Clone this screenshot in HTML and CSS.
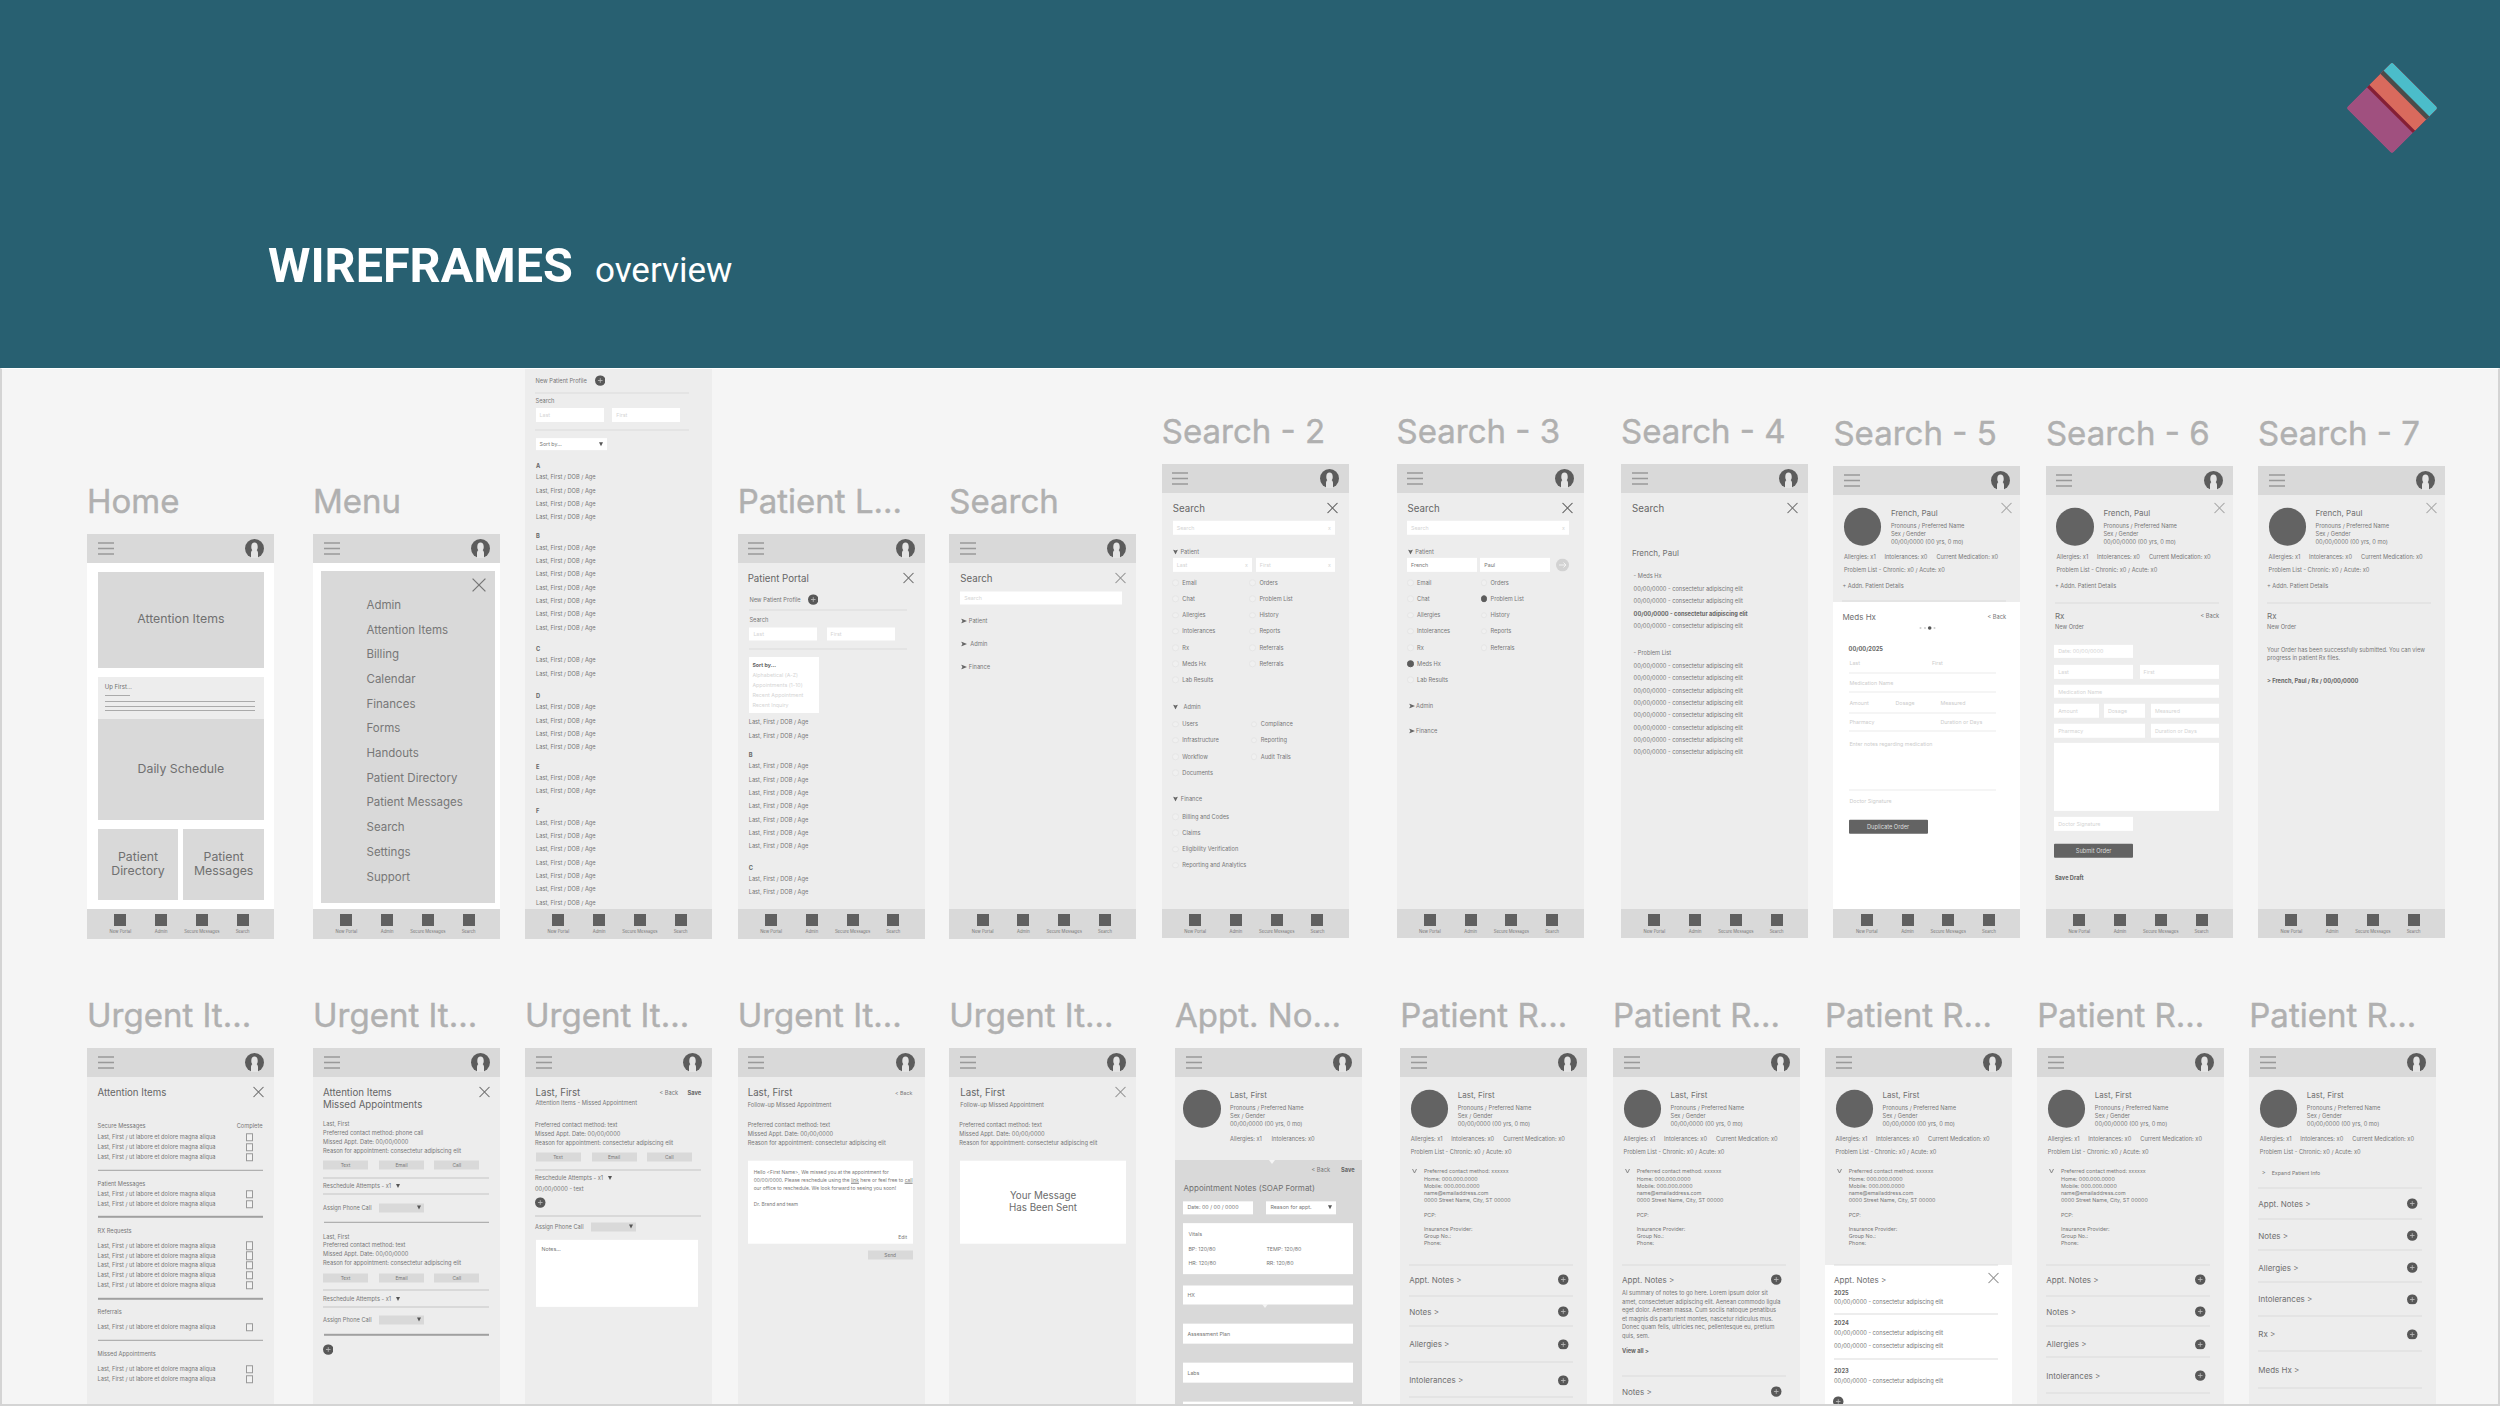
FILE: index.html
```html
<!DOCTYPE html>
<html lang="en">

<head>
    <meta charset="UTF-8">
    <meta name="viewport" content="width=device-width, initial-scale=1.0">
    <title>Wireframes - overview</title>
    <link rel="stylesheet" href="styles.css">
</head>

<body>
    <header class="banner">
        <h1>WIREFRAMES <span>overview</span></h1>
        <svg class="logo" viewBox="0 0 94 94" width="94" height="94">
            <defs>
                <clipPath id="tile">
                    <rect x="14.5" y="14.5" width="65" height="65" rx="3" />
                </clipPath>
            </defs>
            <g transform="rotate(45 47 47)" clip-path="url(#tile)">
                <rect x="14.5" y="14.5" width="65" height="65" fill="#a0507f" />
                <rect x="14.5" y="14.5" width="65" height="35.5" fill="#851f35" />
                <rect x="14.5" y="14.5" width="65" height="32.2" fill="#d96a5d" />
                <rect x="14.5" y="14.5" width="65" height="16.5" fill="#4a4c4b" />
                <rect x="14.5" y="14.5" width="65" height="12" fill="#4bbdca" />
            </g>
        </svg>
    </header>

    <main class="canvas" id="canvas"></main>

    <script src="script.js"></script>
</body>

</html>
```

FILE: styles.css
```css
body {
    margin: 0;
    width: 2500px;
    height: 1406px;
    overflow: hidden;
    font-family: Inter, "Liberation Sans", sans-serif;
    display: flex;
    flex-direction: column;
}

/* Banner */
.banner {
    height: 368px;
    flex: none;
    box-sizing: border-box;
    padding: 61px 61px 0 268px;
    background-color: #286071;
    color: white;
    font-family: Roboto, sans-serif;
    display: flex;
    justify-content: space-between;
    align-items: flex-start;
}

.banner h1 {
    margin: 176px 0 0;
    font-size: 48.5px;
    line-height: 58px;
    font-weight: 700;
    white-space: nowrap;
}

.banner h1 span {
    margin-left: 10px;
    font-size: 35px;
    font-weight: 400;
}

.logo {
    display: block;
}

/* Canvas with the artboards */
.canvas {
    position: relative;
    flex: 1;
    box-sizing: border-box;
    border: 2px solid #d4d4d4;
    border-top: 1px solid #fff;
    background-color: #f5f5f5;
    overflow: hidden;
}

.artboard {
    position: absolute;
    width: 187px;
}

.artboard h2 {
    margin: 0 0 13px;
    height: 40px;
    line-height: 40px;
    font-size: 33px;
    font-weight: 400;
    color: #b0b0b0;
    -webkit-text-stroke: 0.4px #b0b0b0;
    white-space: nowrap;
}

.phone {
    height: 405px;
    display: flex;
    flex-direction: column;
    background-color: #ededed;
    color: #777;
    font-size: 5.7px;
    line-height: 8px;
    white-space: nowrap;
}

.phone.white {
    background-color: #fff;
}

.topbar {
    flex: none;
    height: 28.5px;
    box-sizing: border-box;
    padding: 0 10px 0 10.5px;
    background-color: #d9d9d9;
    display: flex;
    align-items: center;
    justify-content: space-between;
}

.body {
    flex: 1;
    min-height: 0;
    display: flex;
    flex-direction: column;
}

.tabbar {
    flex: none;
    height: 29.5px;
    box-sizing: border-box;
    padding: 5px 11px 0 13px;
    background-color: #d9d9d9;
    display: flex;
}

.tab {
    flex: 1;
    display: flex;
    flex-direction: column;
    align-items: center;
    font-size: 4.2px;
    line-height: 12px;
}

.tab i {
    width: 12px;
    height: 12px;
    background-color: #606060;
}

/* Rows: content sits centred on the bottom edge of its row */
.row {
    flex: none;
    display: flex;
    align-items: flex-end;
}

.cell {
    flex: none;
    transform: translateY(50%);
}

.panel {
    flex: 1;
}

.panel.light {
    background-color: #fff;
}

.panel.dark {
    background-color: #d9d9d9;
}

.h {
    font-size: 9.7px;
    line-height: 12px;
    color: #666;
}

.m {
    font-size: 8px;
    line-height: 10px;
    color: #707070;
}

.xs {
    font-size: 5.3px;
}

.b {
    font-weight: 700;
    color: #666;
}

.pale {
    color: #ccc;
}

.para {
    line-height: 8.6px;
}

.contact {
    font-size: 5.3px;
    line-height: 7.2px;
}

.line {
    height: 1px;
    background-color: #dcdcdc;
}

.line.faint {
    background-color: #ececec;
}

.line.mid {
    background-color: #c6c6c6;
}

.line.bold {
    height: 1.6px;
    background-color: #a0a0a0;
}

.box {
    box-sizing: border-box;
    padding: 0 4px;
    background-color: #fff;
    display: flex;
    align-items: center;
    justify-content: space-between;
    color: #d4d4d4;
    font-size: 5.3px;
}

.box.ink {
    color: #777;
}

.box.top {
    display: block;
    padding: 5px 6px;
}

.box.sort {
    padding: 3px;
    line-height: 10.2px;
}

.box.message {
    justify-content: center;
    text-align: center;
    font-size: 9.8px;
    line-height: 12px;
    color: #6c6c6c;
}

.box.letter {
    align-items: stretch;
    flex-direction: column;
    padding: 7px 6px 3px;
    font-size: 4.9px;
    color: #777;
}

.letter .edit {
    align-self: flex-end;
}

.box.vitals {
    padding: 4px 5px;
    display: grid;
    grid-template-columns: 78px 1fr;
    align-items: center;
    color: #777;
}

.btn {
    box-sizing: border-box;
    height: 9px;
    background-color: #d9d9d9;
    text-align: center;
    line-height: 9px;
    font-size: 4.8px;
}

.select {
    height: 9px;
    background-color: #d9d9d9;
    display: flex;
    align-items: center;
    justify-content: flex-end;
    box-sizing: border-box;
    padding-right: 3px;
}

.solid {
    height: 13.7px;
    border-radius: 1px;
    background-color: #636363;
    color: #ddd;
    text-align: center;
    line-height: 13.7px;
}

.check {
    width: 6.5px;
    height: 8.5px;
    box-sizing: border-box;
    border: 1px solid #999;
    background-color: #f2f2f2;
}

.radio {
    width: 6.5px;
    height: 6.5px;
    box-sizing: border-box;
    border: 0.5px solid #e6e6e6;
    border-radius: 50%;
    background-color: #f0f0f0;
}

.radio.on {
    border-color: #5c5c5c;
    background-color: #5c5c5c;
}

.photo {
    width: 37.5px;
    height: 37.5px;
    border-radius: 50%;
    background-color: #636363;
}

svg {
    display: block;
}

.caret {
    width: 0;
    height: 0;
    border: 2px solid transparent;
    border-top: 4px solid #555;
    border-bottom: 0;
}

.notch {
    width: 0;
    height: 0;
    border: 3px solid transparent;
    border-top: 4px solid #f5f5f5;
    border-bottom: 0;
}

.with-caret {
    display: flex;
    align-items: center;
    gap: 5px;
}

/* Home */
.home {
    flex: 1;
    padding: 9.5px 10px 9.5px 10.7px;
    display: flex;
    flex-direction: column;
    gap: 9.5px;
    font-size: 12.3px;
    line-height: 14.6px;
    text-align: center;
    color: #707070;
}

.tile {
    flex: 1;
    background-color: #d9d9d9;
    display: flex;
    align-items: center;
    justify-content: center;
}

.attention {
    flex: none;
    height: 95.5px;
}

.schedule {
    flex: none;
    height: 142.5px;
    display: flex;
    flex-direction: column;
}

.first {
    height: 41.5px;
    box-sizing: border-box;
    padding: 6px 9px 0 7px;
    background-color: #ededed;
    font-size: 6px;
    line-height: 8px;
    text-align: left;
}

.first div {
    height: 1px;
    margin-top: 3.7px;
    background-color: #aaa;
}

.first .short {
    width: 25px;
    margin: 4px 0 5px;
}

.pair {
    flex: 1;
    display: flex;
    gap: 5px;
}

/* Menu */
.menu {
    flex: 1;
    margin: 8.3px 5.5px 6.5px 7.5px;
    background-color: #d9d9d9;
    display: flex;
    flex-direction: column;
}

.menu svg {
    align-self: flex-end;
    margin: 7px 9px 0 0;
}

.menu ul {
    list-style: none;
    margin: 0;
    padding: 1px 0 0 46px;
    font-size: 11.5px;
    line-height: 24.7px;
    color: #777;
}
```

FILE: script.js
```js
const CANVAS_TOP = 369;
const BAR = 28.5;

// icons
const burger = `<svg width="16" height="13" viewBox="0 0 16 13"><path d="M0 1h16M0 6.5h16M0 12h16" stroke="#999" stroke-width="1.3"/></svg>`;
const avatar = `<svg width="19" height="19" viewBox="0 0 19 19"><circle cx="9.5" cy="9.5" r="9.5" fill="#5c5c5c"/><path d="M6 19v-5c0-1.6.8-2.3 1.3-2.7-1-1.3-1-2.5-1-3.8 0-2.5 1.3-4 3.2-4s3.2 1.5 3.2 4c0 1.3 0 2.5-1 3.8.5.4 1.3 1.1 1.3 2.7v5z" fill="#e4e4e4"/></svg>`;
const plus = `<svg width="10.5" height="10.5" viewBox="0 0 10 10"><circle cx="5" cy="5" r="5" fill="#585858"/><path d="M5 2.8v4.4M2.8 5h4.4" stroke="#bbb" stroke-width=".8"/></svg>`;
const close = (size = 11, color = "#777") => `<svg width="${size}" height="${size}" viewBox="0 0 12 12"><path d="M.5.5l11 11M11.5.5l-11 11" stroke="${color}" stroke-width="1.1"/></svg>`;
const down = `<svg width="5" height="5" viewBox="0 0 5 5"><path d="M0 0l2.500 1L5 0 2.500 5z" fill="#666"/></svg>`;
const right = `<svg width="6" height="5" viewBox="0 0 6 5"><path d="M0 0l6 2.500L0 5l1.500-2.500z" fill="#666"/></svg>`;
const vee = `<svg width="5" height="5" viewBox="0 0 5 5"><path d="M.5.5l2 4 2-4" stroke="#888" fill="none"/></svg>`;
const go = `<svg width="13" height="13" viewBox="0 0 13 13"><circle cx="6.5" cy="6.5" r="6.5" fill="#d2d2d2"/><path d="M3 6.500h7M7.500 4l2.500 2.500L7.500 9" stroke="#f2f2f2" fill="none"/></svg>`;
const dots = `<svg width="18" height="4" viewBox="0 0 18 4"><g fill="#ccc"><circle cx="1.5" cy="2" r="1"/><circle cx="6" cy="2" r="1"/><circle cx="15.5" cy="2" r="1"/></g><circle cx="10.7" cy="2" r="1.8" fill="#555"/></svg>`;
const caret = `<div class="caret"></div>`;

// small pieces
const t = (text, cls = "") => `<div class="${cls}">${text}</div>`;
const box = (w, h, text = "", cls = "") => `<div class="box ${cls}" style="width:${w}px;height:${h}px">${text}</div>`;
const sized = (cls, w, text = "") => `<div class="${cls}" style="width:${w}px">${text}</div>`;
const line = (y, x = 9, w = 164, cls = "") => row(y, x, sized("line " + cls, w));

// one row: a y for its middle, then x / content pairs
function row(y, ...cells) {
    return { y, cells };
}

function rows(start, step, items, make) {
    return items.map((item, i) => make(start + i * step, item));
}

function panel(y, cls, content) {
    return { y, cls, content };
}

function stack(items, start) {
    let at = start;
    return items.flat(Infinity).map(item => {
        const height = item.y - at;
        at = item.y;
        if (item.content) {
            return `<div style="height:${height}px"></div><div class="panel ${item.cls}">${stack(item.content, item.y)}</div>`;
        }
        let cells = "";
        for (let i = 0; i < item.cells.length; i += 2) {
            const next = item.cells[i + 2];
            const width = next === undefined ? "auto" : (next - item.cells[i]) + "px";
            cells += `<div class="cell" style="width:${width}">${item.cells[i + 1]}</div>`;
        }
        return `<div class="row" style="height:${height}px;padding-left:${item.cells[0]}px">${cells}</div>`;
    }).join("");
}

function artboard(title, x, y, content, opts = {}) {
    const el = document.createElement("section");
    el.className = "artboard";
    el.style.left = (x - 2) + "px";
    el.style.top = (y - CANVAS_TOP - (title ? 53 : 0)) + "px";
    const inner = typeof content === "string" ? content : stack(content, title ? BAR : 0);
    const height = opts.open ? 405 : 938.5 - y;
    const tabs = ["New Portal", "Admin", "Secure Messages", "Search"];
    el.innerHTML = `
        ${title ? `<h2>${title}</h2>` : ""}
        <div class="phone ${opts.white ? "white" : ""}" style="height:${height}px">
            ${title ? `<div class="topbar">${burger}${avatar}</div>` : ""}
            <div class="body">${inner}</div>
            ${opts.open ? "" : `<div class="tabbar">${tabs.map(n => `<div class="tab"><i></i>${n}</div>`).join("")}</div>`}
        </div>`;
    document.getElementById("canvas").appendChild(el);
}

// shared content
const person = "Last, First / DOB / Age";
const entry = "00/00/0000 - consectetur adipiscing elit";
const people = (y, n) => rows(y, 13.35, Array(n).fill(person), (at, s) => row(at, 11, t(s)));
const entries = (y, n) => rows(y, 12.33, Array(n).fill(entry), (at, s) => row(at, 12.6, t(s)));

function patient(name, x = 10.5, nameX = 57.5) {
    const full = x > 9;
    return [
        row(46.8, nameX, t(name, "m")),
        row(59.5, nameX, t("Pronouns / Preferred Name")),
        row(60.6, x, `<div class="photo"></div>`),
        row(67.6, nameX, t("Sex / Gender")),
        row(76, nameX, t("00/00/0000 (00 yrs, 0 mo)")),
        full ? row(90.7, x, t("Allergies: x1"), 51, t("Intolerances: x0"), 103, t("Current Medication: x0"))
            : row(90.7, 55, t("Allergies: x1"), 96.6, t("Intolerances: x0")),
        full ? [row(103.4, x, t("Problem List - Chronic: x0 / Acute: x0"))] : []
    ];
}

function frenchPaul() {
    return [
        row(42, 168, close(11, "#aaa")),
        patient("French, Paul"),
        row(119.6, 9, t("+ Addn. Patient Details"))
    ];
}

function details() {
    const info = ["Preferred contact method: xxxxxx", "Home: 000.000.0000", "Mobile: 000.000.0000", "name@emailaddress.com",
        "0000 Street Name, City, ST 00000", "&nbsp;", "PCP:", "&nbsp;", "Insurance Provider:", "Group No.:", "Phone:"];
    return [
        patient("Last, First"),
        row(123, 11.5, vee),
        row(159.3, 23.7, t(info.join("<br>"), "contact")),
        line(216.4)
    ];
}

const section = (y, name, icon = true) => icon ? row(y, 9, t(name + " &gt;", "m"), 158, plus) : row(y, 9, t(name + " &gt;", "m"));

// Home
artboard("Home", 87, 534, `
    <div class="home">
        <div class="tile attention">Attention Items</div>
        <div class="schedule">
            <div class="first">Up First...<div class="short"></div><div></div><div></div><div></div></div>
            <div class="tile">Daily Schedule</div>
        </div>
        <div class="pair">
            <div class="tile">Patient<br>Directory</div>
            <div class="tile">Patient<br>Messages</div>
        </div>
    </div>`, { white: true });

// Menu
const menuItems = ["Admin", "Attention Items", "Billing", "Calendar", "Finances", "Forms", "Handouts",
    "Patient Directory", "Patient Messages", "Search", "Settings", "Support"];
artboard("Menu", 313, 534, `<div class="menu">${close(14)}<ul>${menuItems.map(m => `<li>${m}</li>`).join("")}</ul></div>`, { white: true });

// Patient list, scrolled
const group = (letter, y, first, n) => [row(y, 11, t(letter, "b")), people(first, n)];
artboard("", 525, 368, [
    row(12.7, 10.5, t("New Patient Profile"), 69.5, plus),
    line(25, 10, 154),
    row(33, 10.5, t("Search")),
    row(47.5, 10.5, box(68, 14, "Last"), 87.3, box(68, 14, "First")),
    line(62.4, 10, 154),
    row(76.2, 10.5, box(71.5, 12.3, "Sort by..." + caret, "ink")),
    group("A", 98, 109.4, 4),
    group("B", 168.5, 179.8, 7),
    group("C", 281.4, 292.6, 2),
    group("D", 328, 339.3, 4),
    group("E", 399, 410, 2),
    group("F", 443, 454.8, 7)
]);

// Patient list with sort menu
artboard("Patient L...", 737.7, 534, [
    row(44.2, 165.5, close()),
    row(45.2, 10, t("Patient Portal", "h")),
    row(65.6, 11.7, t("New Patient Profile"), 70.3, plus),
    line(76.5, 11, 158),
    row(86, 11.7, t("Search")),
    row(100, 11.7, box(68, 13, "Last"), 88.9, box(68, 13, "First")),
    line(114.7, 11, 158),
    row(150.6, 11.7, box(70, 56, `<div class="b">Sort by...</div>Alphabetical (A-Z)<br>Appointments (1-10)<br>Recent Appointment<br>Recent Inquiry`, "top sort")),
    people(188.3, 2),
    group("B", 221.3, 232.5, 7),
    group("C", 334, 345.2, 2)
]);

// Search
const searchHead = color => [row(44.2, 165.5, close(11, color)), row(45.2, 11, t("Search", "h"))];
artboard("Search", 949.3, 534, [
    searchHead("#999"),
    row(63.6, 11, box(162, 13, "Search")),
    row(87.3, 12, right, 19.5, t("Patient")),
    row(109.8, 12, right, 21, t("Admin")),
    row(132.6, 12, right, 19.5, t("Finance"))
]);

const radio = (on) => `<div class="radio ${on ? "on" : ""}"></div>`;
function options(y, left, rightItems, x2, picked = []) {
    return left.map((name, i) => {
        const cells = [10.5, radio(picked.includes(name)), 20.5, t(name)];
        if (rightItems[i]) {
            cells.push(x2 - 10, radio(picked.includes(rightItems[i])), x2, t(rightItems[i]));
        }
        return row(y + i * 16.2, ...cells);
    });
}
const leftItems = ["Email", "Chat", "Allergies", "Intolerances", "Rx", "Meds Hx", "Lab Results"];
const rightItems = ["Orders", "Problem List", "History", "Reports", "Referrals"];

// Search - 2
artboard("Search - 2", 1161.8, 464.3, [
    searchHead("#666"),
    row(63.7, 11, box(162, 13.5, "Search<span>x</span>")),
    row(87.7, 11, down, 18.7, t("Patient")),
    row(100.8, 11, box(79, 13.7, "Last<span>x</span>"), 94, box(79, 13.7, "First<span>x</span>")),
    options(118.5, leftItems, [...rightItems, "Referrals"], 97.6),
    row(242.4, 11, down, 21.7, t("Admin")),
    options(260, ["Users", "Infrastructure", "Workflow", "Documents"], ["Compliance", "Reporting", "Audit Trails"], 99),
    row(335, 11, down, 19, t("Finance")),
    options(352.5, ["Billing and Codes", "Claims", "Eligibility Verification", "Reporting and Analytics"], [], 99)
]);

// Search - 3
artboard("Search - 3", 1396.5, 464.3, [
    searchHead("#666"),
    row(63.7, 10.5, box(162, 13.5, "Search<span>x</span>")),
    row(87.7, 11, down, 18.7, t("Patient")),
    row(100.8, 10.5, box(70, 13.7, "French", "ink"), 83.8, box(70, 13.7, "Paul", "ink"), 159.4, go),
    options(118.5, leftItems, rightItems, 94, ["Meds Hx", "Problem List"]),
    row(242, 12, right, 19.5, t("Admin")),
    row(266.6, 12, right, 19.5, t("Finance"))
]);

// Search - 4
artboard("Search - 4", 1621, 464.3, [
    searchHead("#777"),
    row(88.4, 11, t("French, Paul", "m")),
    row(112.2, 12.6, t("- Meds Hx")),
    entries(124.5, 2),
    row(149.4, 12.6, t(entry, "b")),
    row(161.7, 12.6, t(entry)),
    row(189, 12.6, t("- Problem List")),
    entries(201.7, 8)
]);

// Search - 5
const rule = y => line(y, 15.5, 147, "faint");
artboard("Search - 5", 1833.4, 466.3, [
    frenchPaul(),
    line(134.8),
    panel(136, "light", [
        row(150.5, 9, t("Meds Hx", "m"), 154, t("&lt; Back")),
        row(162, 85.5, dots),
        row(182.4, 15.2, t("00/00/2025", "b")),
        row(197, 16, t("Last", "pale xs"), 98.5, t("First", "pale xs")),
        rule(207.3),
        row(217, 16, t("Medication Name", "pale xs")),
        rule(225.5),
        row(236.8, 16, t("Amount", "pale xs"), 62, t("Dosage", "pale xs"), 107, t("Measured", "pale xs")),
        rule(246.6),
        row(255.7, 16, t("Pharmacy", "pale xs"), 107, t("Duration or Days", "pale xs")),
        rule(265),
        row(277.4, 16, t("Enter notes regarding medication", "pale xs")),
        rule(323.7),
        row(335.3, 16, t("Doctor Signature", "pale xs")),
        row(360.6, 15.2, sized("solid", 79, "Duplicate Order"))
    ])
]);

// Search - 6
artboard("Search - 6", 2045.9, 466.3, [
    frenchPaul(),
    line(136.4),
    row(149.4, 9, t("Rx", "m"), 154.5, t("&lt; Back")),
    row(160.6, 9, t("New Order")),
    row(185, 8.3, box(79, 13.7, "Date: 00/00/0000")),
    row(205.4, 8.3, box(79, 13.7, "Last"), 93.7, box(79.3, 13.7, "First")),
    row(225.2, 8.3, box(164.7, 13.5, "Medication Name")),
    row(244.8, 8.3, box(44.5, 13.5, "Amount"), 58, box(41, 13.5, "Dosage"), 105, box(68, 13.5, "Measured")),
    row(264.6, 8.3, box(90.7, 13.5, "Pharmacy"), 105, box(68, 13.5, "Duration or Days")),
    row(311, 8.3, box(164.7, 67.7)),
    row(357.6, 8.3, box(79, 13.7, "Doctor Signature")),
    row(385, 8.3, sized("solid", 79, "Submit Order")),
    row(411.4, 9, t("Save Draft", "b"))
]);

// Search - 7
artboard("Search - 7", 2258, 466.3, [
    frenchPaul(),
    line(136.4),
    row(149.4, 9, t("Rx", "m")),
    row(160.6, 9, t("New Order")),
    row(187.6, 9, t("Your Order has been successfully submitted. You can view<br>progress in patient Rx files.")),
    row(215, 9, t("&gt; French, Paul / Rx / 00/00/0000", "b"))
]);

// Urgent items
const ROW2 = 1048.3;
const tasks = (y, n) => rows(y, 9.95, Array(n).fill("Last, First / ut labore et dolore magna aliqua"),
    (at, s) => row(at, 10.6, t(s), 159.5, `<div class="check"></div>`));
const thick = y => line(y, 10.5, 165.5, "bold");
const thin = y => line(y, 10, 166, "mid");

artboard("Urgent It...", 87, ROW2, [
    row(44, 166, close()),
    row(45, 10.6, t("Attention Items", "h")),
    row(77.3, 10.6, t("Secure Messages"), 149.7, t("Complete")),
    tasks(89, 3),
    thick(122),
    row(135.7, 10.6, t("Patient Messages")),
    tasks(146, 2),
    thick(168.7),
    row(182.4, 10.6, t("RX Requests")),
    tasks(197.4, 5),
    thick(250.4),
    row(264, 10.6, t("Referrals")),
    tasks(279, 1),
    thick(292),
    row(305.7, 10.6, t("Missed Appointments")),
    tasks(321, 2)
], { open: true });

const attempts = `<div class="with-caret">Reschedule Attempts - x1 ${caret}</div>`;
const reach = (y, x = 10) => row(y, x, sized("btn", 45, "Text"), x + 56, sized("btn", 45, "Email"), x + 111.3, sized("btn", 45, "Call"));
const assign = y => row(y, 10, t("Assign Phone Call"), 66, sized("select", 45, caret));

function missed(y, method) {
    return [
        row(y, 10, t("Last, First")),
        row(y + 8.6, 10, t("Preferred contact method: " + method)),
        row(y + 17.4, 10, t("Missed Appt. Date: 00/00/0000")),
        row(y + 26.4, 10, t("Reason for appointment: consectetur adipiscing elit")),
        reach(y + 41),
        thin(y + 53.3),
        row(y + 62, 10, attempts),
        thin(y + 70),
        assign(y + 83.3),
        thick(y + 98.2)
    ];
}

artboard("Urgent It...", 313, ROW2, [
    row(44, 166, close()),
    row(45, 10, t("Attention Items", "h")),
    row(56.7, 10, t("Missed Appointments", "h")),
    missed(76, "phone call"),
    missed(188.4, "text"),
    row(301.4, 9.5, plus)
], { open: true });

const contactLines = [
    row(76.4, 10, t("Preferred contact method: text")),
    row(85.4, 10, t("Missed Appt. Date: 00/00/0000")),
    row(94.4, 10, t("Reason for appointment: consectetur adipiscing elit"))
];

artboard("Urgent It...", 525, ROW2, [
    row(45, 10.5, t("Last, First", "h"), 134.5, t("&lt; Back"), 162.5, t("Save", "b")),
    row(55, 10.5, t("Attention Items - Missed Appointment")),
    contactLines,
    reach(108.7, 10.5),
    thin(122),
    row(130, 10, attempts),
    row(140.4, 10, t("00/00/0000 - text")),
    row(154.7, 10, plus),
    thin(167.4),
    assign(178.7),
    row(225, 10.5, box(162, 67.7, "Notes...", "top ink"))
], { open: true });

artboard("Urgent It...", 737.7, ROW2, [
    row(45, 10, t("Last, First", "h"), 157.4, t("&lt; Back", "xs")),
    row(56.4, 10, t("Follow-up Missed Appointment")),
    contactLines,
    row(153.8, 10, box(165.3, 83.4, `<div>Hello &lt;First Name&gt;, We missed you at the appointment for<br>00/00/0000. Please reschedule using the <u>link</u> here or feel free to <u>call</u><br>our office to reschedule. We look forward to seeing you soon!<br><br>Dr. Brand and team</div><div class="edit">Edit</div>`, "letter")),
    row(207, 130, sized("btn", 45, "Send"))
], { open: true });

artboard("Urgent It...", 949.3, ROW2, [
    row(44, 166, close(11, "#999")),
    row(45, 11, t("Last, First", "h")),
    row(56.4, 11, t("Follow-up Missed Appointment")),
    contactLines,
    row(153.8, 11, box(165.5, 83.4, "Your Message<br>Has Been Sent", "message"))
], { open: true });

// Appointment notes
artboard("Appt. No...", 1175, ROW2, [
    patient("Last, First", 8.2, 55),
    panel(112, "dark", [
        row(114, 93.6, `<div class="notch"></div>`),
        row(121.7, 136.5, t("&lt; Back"), 166, t("Save", "b")),
        row(139.4, 8.6, t("Appointment Notes (SOAP Format)", "m")),
        row(159.3, 8.4, box(70, 12.7, "Date: 00 / 00 / 0000", "ink"), 91.4, box(70, 12.7, "Reason for appt. " + caret, "ink")),
        row(200.5, 8.4, box(169.3, 50.3, "<span>Vitals</span><span></span><span>BP: 120/80</span><span>TEMP: 120/80</span><span>HR: 120/80</span><span>RR: 120/80</span>", "vitals")),
        row(246.5, 8.4, box(169.3, 19, "HX", "ink")),
        row(258, 87, `<div class="notch"></div>`),
        row(285.3, 8.4, box(169.3, 19.3, "Assessment Plan", "ink")),
        row(324.5, 8.4, box(169.3, 19.3, "Labs", "ink")),
        row(363.5, 8.4, box(169.3, 19.3, "", "ink"))
    ])
], { open: true });

// Patient records
artboard("Patient R...", 1400.2, ROW2, [
    details(),
    section(231.4, "Appt. Notes"),
    line(247.4), section(263.4, "Notes"),
    line(277.7), section(296, "Allergies"),
    line(313.7), section(332, "Intolerances"),
    line(348.4)
], { open: true });

artboard("Patient R...", 1613, ROW2, [
    details(),
    section(231.4, "Appt. Notes"),
    row(266.4, 9, t("AI summary of notes to go here. Lorem ipsum dolor sit<br>amet, consectetuer adipiscing elit. Aenean commodo ligula<br>eget dolor. Aenean massa. Cum sociis natoque penatibus<br>et magnis dis parturient montes, nascetur ridiculus mus.<br>Donec quam felis, ultricies nec, pellentesque eu, pretium<br>quis, sem.", "para")),
    row(302.4, 9, t("View all &gt;", "b")),
    line(327.4), section(343.4, "Notes")
], { open: true });

const log = y => row(y, 9, t(entry));
artboard("Patient R...", 1825, ROW2, [
    details(),
    panel(216.6, "light", [
        row(229.4, 162.5, close(11, "#999")),
        row(231.4, 9, t("Appt. Notes &gt;", "m")),
        row(244.4, 9, t("2025", "b")), log(253.7),
        line(265.4),
        row(274.7, 9, t("2024", "b")), log(284.7), log(297.4),
        line(311),
        row(322.7, 9, t("2023", "b")), log(333),
        row(353, 8, plus)
    ])
], { open: true });

artboard("Patient R...", 2037.3, ROW2, [
    details(),
    section(231.4, "Appt. Notes"),
    line(247.4), section(263.4, "Notes"),
    line(277.7), section(296, "Allergies"),
    line(309), section(327.4, "Intolerances"),
    line(344.4), section(359, "Rx", false)
], { open: true });

artboard("Patient R...", 2249.3, ROW2, [
    patient("Last, First"),
    row(125, 12.5, t("&gt;"), 22.4, t("Expand Patient Info", "xs")),
    line(140), section(155.4, "Appt. Notes"),
    line(171), section(187.4, "Notes"),
    line(201.7), section(219.7, "Allergies"),
    line(233.7), section(251, "Intolerances"),
    line(268), section(286, "Rx"),
    line(302.7), section(321.4, "Meds Hx", false),
    line(340), section(359, "Lab Results", false)
], { open: true });
```
